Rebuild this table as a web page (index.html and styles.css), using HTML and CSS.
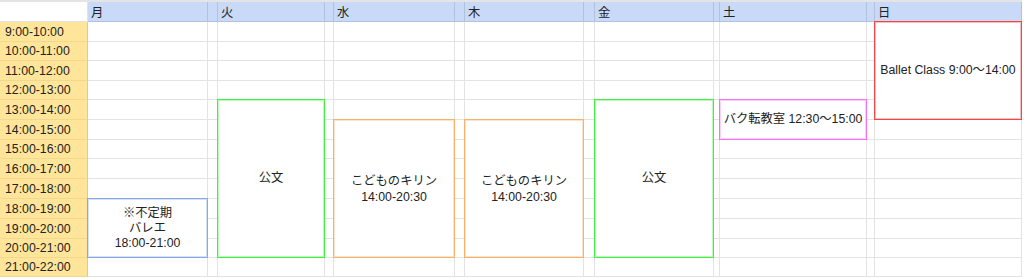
FILE: index.html
```html
<!DOCTYPE html>
<html lang="ja">
<head>
<meta charset="utf-8">
<title>週間スケジュール</title>
<link rel="stylesheet" href="styles.css">
</head>
<body>
<div class="sheet">
  <!-- A: time labels -->
  <div class="c corner"></div>
  <div class="c time">9:00-10:00</div>
  <div class="c time">10:00-11:00</div>
  <div class="c time">11:00-12:00</div>
  <div class="c time">12:00-13:00</div>
  <div class="c time">13:00-14:00</div>
  <div class="c time">14:00-15:00</div>
  <div class="c time">15:00-16:00</div>
  <div class="c time">16:00-17:00</div>
  <div class="c time">17:00-18:00</div>
  <div class="c time">18:00-19:00</div>
  <div class="c time">19:00-20:00</div>
  <div class="c time">20:00-21:00</div>
  <div class="c time">21:00-22:00</div>

  <!-- 月 -->
  <div class="c hd">月</div>
  <i class="c"></i><i class="c"></i><i class="c"></i><i class="c"></i><i class="c"></i><i class="c"></i><i class="c"></i><i class="c"></i><i class="c"></i>
  <div class="ev ev-blue span3">※不定期<br>バレエ<br>18:00-21:00</div>
  <i class="c"></i>

  <!-- gap -->
  <div class="c hd"></div>
  <i class="c"></i><i class="c"></i><i class="c"></i><i class="c"></i><i class="c"></i><i class="c"></i><i class="c"></i><i class="c"></i><i class="c"></i><i class="c"></i><i class="c"></i><i class="c"></i><i class="c"></i>

  <!-- 火 -->
  <div class="c hd">火</div>
  <i class="c"></i><i class="c"></i><i class="c"></i><i class="c"></i>
  <div class="ev ev-green span8">公文</div>
  <i class="c"></i>

  <!-- gap -->
  <div class="c hd"></div>
  <i class="c"></i><i class="c"></i><i class="c"></i><i class="c"></i><i class="c"></i><i class="c"></i><i class="c"></i><i class="c"></i><i class="c"></i><i class="c"></i><i class="c"></i><i class="c"></i><i class="c"></i>

  <!-- 水 -->
  <div class="c hd">水</div>
  <i class="c"></i><i class="c"></i><i class="c"></i><i class="c"></i><i class="c"></i>
  <div class="ev ev-orange span7">こどものキリン<br>14:00-20:30</div>
  <i class="c"></i>

  <!-- gap -->
  <div class="c hd"></div>
  <i class="c"></i><i class="c"></i><i class="c"></i><i class="c"></i><i class="c"></i><i class="c"></i><i class="c"></i><i class="c"></i><i class="c"></i><i class="c"></i><i class="c"></i><i class="c"></i><i class="c"></i>

  <!-- 木 -->
  <div class="c hd">木</div>
  <i class="c"></i><i class="c"></i><i class="c"></i><i class="c"></i><i class="c"></i>
  <div class="ev ev-orange span7">こどものキリン<br>14:00-20:30</div>
  <i class="c"></i>

  <!-- gap -->
  <div class="c hd"></div>
  <i class="c"></i><i class="c"></i><i class="c"></i><i class="c"></i><i class="c"></i><i class="c"></i><i class="c"></i><i class="c"></i><i class="c"></i><i class="c"></i><i class="c"></i><i class="c"></i><i class="c"></i>

  <!-- 金 -->
  <div class="c hd">金</div>
  <i class="c"></i><i class="c"></i><i class="c"></i><i class="c"></i>
  <div class="ev ev-green span8">公文</div>
  <i class="c"></i>

  <!-- gap -->
  <div class="c hd"></div>
  <i class="c"></i><i class="c"></i><i class="c"></i><i class="c"></i><i class="c"></i><i class="c"></i><i class="c"></i><i class="c"></i><i class="c"></i><i class="c"></i><i class="c"></i><i class="c"></i><i class="c"></i>

  <!-- 土 -->
  <div class="c hd">土</div>
  <i class="c"></i><i class="c"></i><i class="c"></i><i class="c"></i>
  <div class="ev ev-pink span2">バク転教室 12:30〜15:00</div>
  <i class="c"></i><i class="c"></i><i class="c"></i><i class="c"></i><i class="c"></i><i class="c"></i><i class="c"></i>

  <!-- gap -->
  <div class="c hd"></div>
  <i class="c"></i><i class="c"></i><i class="c"></i><i class="c"></i><i class="c"></i><i class="c"></i><i class="c"></i><i class="c"></i><i class="c"></i><i class="c"></i><i class="c"></i><i class="c"></i><i class="c"></i>

  <!-- 日 -->
  <div class="c hd">日</div>
  <div class="ev ev-red span5">Ballet Class 9:00〜14:00</div>
  <i class="c"></i><i class="c"></i><i class="c"></i><i class="c"></i><i class="c"></i><i class="c"></i><i class="c"></i><i class="c"></i>
</div>
</body>
</html>
```

FILE: styles.css
```css
html, body {
  margin: 0;
  padding: 0;
  background: #ffffff;
}

body {
  font-family: "Liberation Sans", "Noto Sans CJK JP", sans-serif;
  font-size: 12.3px;
  color: #222222;
}

.sheet {
  width: 1022px;
  border-top: 2px solid #e4e4e4;
  display: grid;
  grid-auto-flow: column;
  grid-template-columns: 88px 120px 10px 107px 9px 121px 10px 119px 11px 119px 6px 147px 8px 147px;
  grid-template-rows: 20px 20px 19px 20px 19px 20px 20px 19px 20px 20px 20px 20px 19px 19px;
}

.c {
  display: flex;
  align-items: center;
  box-sizing: border-box;
  border-right: 1px solid rgba(0, 0, 0, 0.11);
  border-bottom: 1px solid rgba(0, 0, 0, 0.11);
  font-style: normal;
  white-space: nowrap;
  overflow: hidden;
}

.corner {
  background: #ffffff;
}

.hd {
  background: #c9daf8;
  padding-left: 3px;
}

.time {
  background: #ffe599;
  padding-left: 5px;
  border-bottom-color: rgba(120, 90, 0, 0.09);
}

.ev {
  z-index: 1;
  display: flex;
  align-items: center;
  justify-content: center;
  text-align: center;
  line-height: 15px;
  white-space: nowrap;
  background: #ffffff;
  border-width: 1px;
  border-style: solid;
  margin: -1px 0 0 -1px;
  box-sizing: border-box;
}

.span2 { grid-row: span 2; }
.span3 { grid-row: span 3; }
.span5 { grid-row: span 5; }
.span7 { grid-row: span 7; line-height: 16px; }
.span8 { grid-row: span 8; }

.ev-blue { border-color: #86a8e6; box-shadow: inset 0 0 0 1px rgba(134, 168, 230, 0.35); }
.ev-green { border-color: #44ee44; box-shadow: inset 0 0 0 1px rgba(68, 238, 68, 0.35); }
.ev-orange { border-color: #f6b26b; box-shadow: inset 0 0 0 1px rgba(246, 178, 107, 0.35); }
.ev-pink { border-color: #f572f5; box-shadow: inset 0 0 0 1px rgba(245, 114, 245, 0.35); }
.ev-red { border-color: #f24646; box-shadow: inset 0 0 0 1px rgba(242, 70, 70, 0.35); }
```
